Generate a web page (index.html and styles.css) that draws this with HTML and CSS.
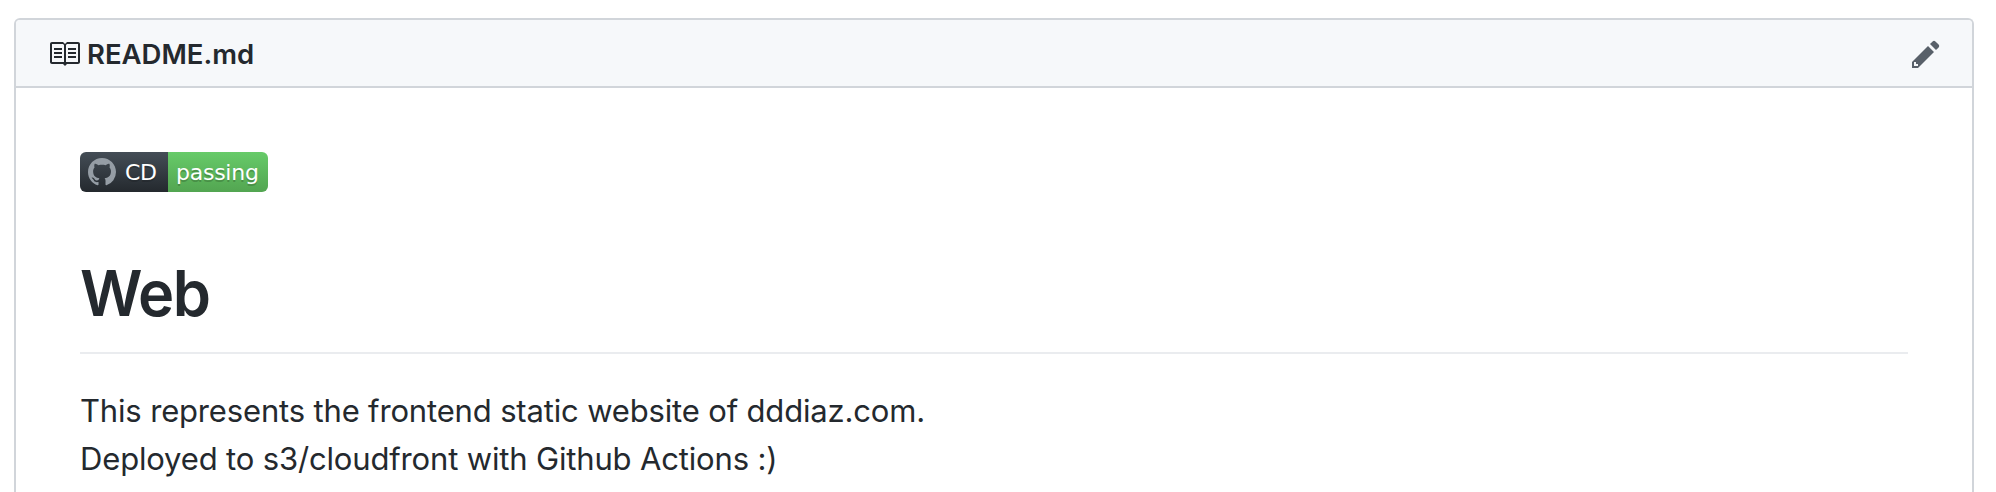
FILE: index.html
```
<!DOCTYPE html>
<html lang="en">
<head>
<meta charset="utf-8">
<title>README.md</title>
<link rel="stylesheet" href="styles.css">
</head>
<body>
<section class="box">
  <header class="box-header">
    <svg class="icon-book" viewBox="0 0 16 16" width="32" height="32"><path fill-rule="evenodd" d="M3 5h4v1H3V5zm0 3h4V7H3v1zm0 2h4V9H3v1zm11-5h-4v1h4V5zm0 2h-4v1h4V7zm0 2h-4v1h4V9zm2-6v9c0 .55-.45 1-1 1H9.5l-1 1-1-1H2c-.55 0-1-.45-1-1V3c0-.55.45-1 1-1h5.5l1 1 1-1H15c.55 0 1 .45 1 1zm-8 .5L7.5 3H2v9h6V3.5zm7-.5H9.5l-.5.5V12h6V3z"/></svg>
    <h2 class="file-name">README.md</h2>
    <svg class="icon-pencil" viewBox="0 0 14 16" width="28" height="32"><path fill-rule="evenodd" d="M0 12v3h3l8-8-3-3-8 8zm3 2H1v-2h1v1h1v1zm10.3-9.3L12 6 9 3l1.3-1.3a.996.996 0 0 1 1.41 0l1.59 1.59c.39.39.39 1.02 0 1.41z"/></svg>
  </header>
  <article class="markdown">
    <div class="badge">
      <div class="badge-label">
        <svg class="icon-mark" viewBox="0 0 16 16" width="28" height="28"><path fill-rule="evenodd" d="M8 0C3.58 0 0 3.58 0 8c0 3.54 2.29 6.53 5.47 7.59.4.07.55-.17.55-.38 0-.19-.01-.82-.01-1.49-2.01.37-2.53-.49-2.69-.94-.09-.23-.48-.94-.82-1.13-.28-.15-.68-.52-.01-.53.63-.01 1.08.58 1.23.82.72 1.21 1.87.87 2.33.66.07-.52.28-.87.51-1.07-1.78-.2-3.64-.89-3.64-3.95 0-.87.31-1.59.82-2.15-.08-.2-.36-1.02.08-2.12 0 0 .67-.21 2.2.82.64-.18 1.32-.27 2-.27s1.36.09 2 .27c1.53-1.04 2.2-.82 2.2-.82.44 1.1.16 1.92.08 2.12.51.56.82 1.27.82 2.15 0 3.07-1.87 3.75-3.65 3.95.29.25.54.73.54 1.48 0 1.07-.01 1.93-.01 2.2 0 .21.15.46.55.38A8.01 8.01 0 0 0 16 8c0-4.42-3.58-8-8-8z"/></svg>
        <span class="badge-name">CD</span>
      </div>
      <div class="badge-status">passing</div>
    </div>
    <h1 class="title"><span class="title-text">Web</span></h1>
    <p class="text">This represents the frontend static website of dddiaz.com.<br>Deployed to s3/cloudfront with Github Actions :)</p>
  </article>
</section>
</body>
</html>
```
FILE: styles.css
```
* { box-sizing: border-box; }
body {
  margin: 0;
  padding: 18px 22px 0 14px;
  background: #fff;
  color: #24292e;
  font-family: Inter, "Liberation Sans", sans-serif;
}
.box {
  height: 474px;
  border: 2px solid #d1d5da;
  border-bottom: 0;
  border-radius: 6px 6px 0 0;
}
.box-header {
  display: flex;
  align-items: center;
  height: 68px;
  padding: 0 32px;
  border-bottom: 2px solid #d1d5da;
  border-radius: 4px 4px 0 0;
  background: #f6f8fa;
}
svg { display: block; flex: none; }
.icon-book { fill: #24292e; margin-top: 2px; }
.file-name {
  flex: 1;
  margin: 2px 0 0 7px;
  font-size: 27.5px;
  line-height: 42px;
  font-weight: 600;
}
.icon-pencil { fill: #586069; margin-top: 2px; }
.markdown { padding: 64px 64px 0; }
.badge {
  display: flex;
  width: 188px;
  height: 40px;
  border-radius: 6px;
  overflow: hidden;
  color: #fff;
  font-family: "DejaVu Sans", Verdana, sans-serif;
  font-size: 22px;
  line-height: 42px;
  letter-spacing: -0.25px;
}
.badge-label {
  display: flex;
  width: 88px;
  padding: 6px 0 0 8px;
  background: linear-gradient(#444d56, #24292e);
  text-shadow: 0 2px 0 rgba(27, 31, 35, 0.4);
}
.badge-status {
  flex: 1;
  padding-left: 8px;
  background: linear-gradient(#67cb69, #53a551);
  text-shadow: 0 2px 0 rgba(62, 122, 60, 0.6);
}
.icon-mark { fill: #959da5; }
.badge-name { margin: -6px 0 0 9px; }
.title {
  margin: 60px 0 32px;
  height: 102px;
  border-bottom: 2px solid #eaecef;
  font-size: 63.5px;
  line-height: 82px;
  font-weight: 600;
}
.title-text {
  display: inline-block;
  letter-spacing: -1.5px;
  transform: scaleX(0.965);
  transform-origin: left;
}
.text {
  margin: 0;
  padding-top: 1px;
  font-size: 31px;
  line-height: 48px;
  letter-spacing: -0.16px;
}
```
